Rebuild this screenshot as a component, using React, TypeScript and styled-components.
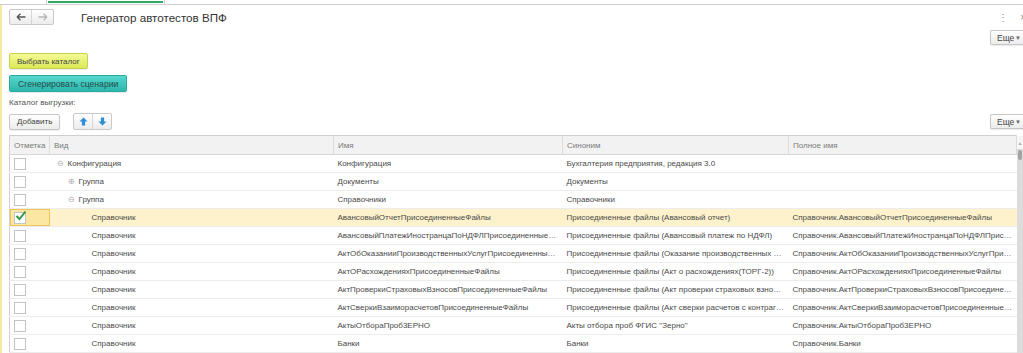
import styled, { createGlobalStyle } from 'styled-components';

const GlobalStyle = createGlobalStyle`
  html, body {
    margin: 0;
    padding: 0;
    background: #ffffff;
    font-family: 'Liberation Sans', Arial, sans-serif;
    color: #4a4a4a;
    overflow: hidden;
  }
`;

const Page = styled.div`
  width: 1023px;
  height: 353px;
  display: flex;
  flex-direction: column;
  overflow: hidden;
`;

const TabStrip = styled.div`
  height: 4px;
  flex-shrink: 0;
  border-bottom: 1px solid #cfcfcf;
  display: flex;
  padding-left: 46px;
`;

const Tab = styled.div`
  width: 117px;
  border-left: 1px solid #cfcfcf;
  border-right: 1px solid #cfcfcf;
  position: relative;
  &::after {
    content: '';
    position: absolute;
    left: 1px;
    right: 1px;
    top: 1px;
    height: 2px;
    background: #2faa62;
  }
`;

const Body = styled.div`
  flex: 1 0 auto;
  border-left: 2px solid #f4e7a1;
  padding: 4px 0 0 7px;
  display: flex;
  flex-direction: column;
  & > * {
    flex-shrink: 0;
  }
`;

const TitleBar = styled.div`
  display: flex;
  align-items: center;
  height: 16px;
`;

const NavGroup = styled.div`
  display: flex;
  height: 14px;
  border: 1px solid #c9c9c9;
  border-radius: 2px;
  background: linear-gradient(#ffffff, #ececec);
`;

const NavBtn = styled.div`
  width: 21px;
  display: flex;
  align-items: center;
  justify-content: center;
  & + & {
    border-left: 1px solid #d6d6d6;
  }
`;

const Title = styled.div`
  margin-left: 27px;
  font-size: 11.6px;
  color: #333;
  flex: 1;
`;

const WinControls = styled.div`
  display: flex;
  gap: 12px;
  color: #888;
  font-size: 10px;
  margin-right: -3px;
`;

const RightRow = styled.div`
  display: flex;
  justify-content: flex-end;
  margin-top: 5px;
  height: 17px;
`;

const Button = styled.div<{ $variant?: 'lime' | 'teal' }>`
  display: inline-flex;
  align-items: center;
  height: 14px;
  padding: 0 7px;
  font-size: 8px;
  border-radius: 2px;
  border: 1px solid
    ${(p) =>
      p.$variant === 'lime' ? '#c7d24e' : p.$variant === 'teal' ? '#2aa9a1' : '#c6c6c6'};
  background: ${(p) =>
    p.$variant === 'lime'
      ? 'linear-gradient(#f4fb96, #dbe957)'
      : p.$variant === 'teal'
      ? 'linear-gradient(#56d6cc, #2db6ad)'
      : 'linear-gradient(#ffffff, #ececec)'};
  color: ${(p) => (p.$variant === 'teal' ? '#1f4d4b' : '#444')};
  box-shadow: 0 1px 1px rgba(0, 0, 0, 0.08);
  white-space: nowrap;
`;

const TealButton = styled(Button)`
  height: 15px;
  font-size: 8.6px;
  padding: 0 8px;
`;

const MoreButton = styled(Button)`
  height: 15px;
  width: 33px;
  box-sizing: border-box;
  font-size: 8.5px;
  padding: 0 2px 0 6px;
  justify-content: space-between;
  border-right: none;
  border-radius: 2px 0 0 2px;
`;

const Caret = styled.span`
  font-size: 6px;
  line-height: 6px;
  color: #666;
`;

const ButtonRow = styled.div`
  display: flex;
  align-items: center;
  margin-top: 6px;
`;

const Label = styled.div`
  font-size: 8px;
  color: #555;
  margin-top: 3px;
  height: 14px;
  display: flex;
  align-items: center;
`;

const CommandBar = styled.div`
  display: flex;
  align-items: center;
  margin-top: 4px;
  height: 17px;
  gap: 13px;
`;

const ArrowGroup = styled.div`
  display: flex;
  height: 15px;
  border: 1px solid #c9c9c9;
  border-radius: 2px;
  background: linear-gradient(#ffffff, #ececec);
`;

const ArrowBtn = styled.div`
  width: 18px;
  display: flex;
  align-items: center;
  justify-content: center;
  & + & {
    border-left: 1px solid #d6d6d6;
  }
`;

const Spacer = styled.div`
  flex: 1;
`;

const TableWrap = styled.div`
  margin-top: 5px;
  display: flex;
`;

const Table = styled.table`
  width: 1007px;
  border-collapse: collapse;
  table-layout: fixed;
  font-size: 8px;
  border-top: 1px solid #cfcfcf;
  border-left: 1px solid #cfcfcf;
`;

const Th = styled.th`
  height: 18px;
  padding: 0 4px;
  text-align: left;
  font-weight: normal;
  color: #7a7a7a;
  background: #f2f2f2;
  border-right: 1px solid #dcdcdc;
  border-bottom: 1px solid #d6d6d6;
  white-space: nowrap;
  overflow: hidden;
`;

const Tr = styled.tr<{ $selected?: boolean }>`
  background: ${(p) => (p.$selected ? '#fdf2cb' : '#ffffff')};
`;

const Td = styled.td`
  height: 17px;
  padding: 0 4px;
  border-bottom: 1px solid #ececec;
  white-space: nowrap;
  overflow: hidden;
  text-overflow: ellipsis;
  color: #4a4a4a;
`;

const CheckCell = styled(Td)<{ $selected?: boolean }>`
  padding: 0 0 0 4px;
  ${(p) =>
    p.$selected
      ? 'background: #fbe7a2; box-shadow: inset 0 0 0 1px #efc55a;'
      : ''}
`;

const Box = styled.div`
  width: 10px;
  height: 10px;
  border: 1px solid #c4c4c4;
  background: #fff;
  position: relative;
`;

const Tree = styled.span<{ $indent: number }>`
  display: inline-flex;
  align-items: center;
  padding-left: ${(p) => p.$indent}px;
`;

const Toggle = styled.span`
  display: inline-flex;
  width: 11px;
  color: #a8a8a8;
  font-size: 8px;
`;

const Scrollbar = styled.div`
  width: 7px;
  background: #dcdcdc;
  margin-top: 1px;
`;

const ScrollArrow = styled.div`
  height: 13px;
  display: flex;
  justify-content: center;
  align-items: center;
  background: #f6f6f6;
  color: #b0b0b0;
  font-size: 5px;
`;

const Thumb = styled.div`
  height: 10px;
  margin: 1px 1px 0;
  border-radius: 2px;
  background: #a3a3a3;
`;

const ArrowIcon = ({ dir, color }: { dir: 'left' | 'right' | 'up' | 'down'; color: string }) => {
  if (dir === 'up' || dir === 'down') {
    const d =
      dir === 'up'
        ? 'M5 0.5 L9.5 5 L6.8 5 L6.8 9.5 L3.2 9.5 L3.2 5 L0.5 5 Z'
        : 'M5 9.5 L9.5 5 L6.8 5 L6.8 0.5 L3.2 0.5 L3.2 5 L0.5 5 Z';
    return (
      <svg width="9" height="9" viewBox="0 0 10 10">
        <path d={d} fill={color} />
      </svg>
    );
  }
  const d =
    dir === 'left'
      ? 'M1 5 L4.5 1.8 M1 5 L4.5 8.2 M1 5 L9.5 5'
      : 'M9 5 L5.5 1.8 M9 5 L5.5 8.2 M0.5 5 L9 5';
  return (
    <svg width="10" height="10" viewBox="0 0 10 10">
      <path d={d} stroke={color} strokeWidth="1.3" fill="none" />
    </svg>
  );
};

type Row = {
  level: number;
  toggle?: 'open' | 'closed';
  kind: string;
  name: string;
  synonym: string;
  full: string;
  checked?: boolean;
};

const rows: Row[] = [
  { level: 0, toggle: 'open', kind: 'Конфигурация', name: 'Конфигурация', synonym: 'Бухгалтерия предприятия, редакция 3.0', full: '' },
  { level: 1, toggle: 'closed', kind: 'Группа', name: 'Документы', synonym: 'Документы', full: '' },
  { level: 1, toggle: 'open', kind: 'Группа', name: 'Справочники', synonym: 'Справочники', full: '' },
  { level: 2, kind: 'Справочник', name: 'АвансовыйОтчетПрисоединенныеФайлы', synonym: 'Присоединенные файлы (Авансовый отчет)', full: 'Справочник.АвансовыйОтчетПрисоединенныеФайлы', checked: true },
  { level: 2, kind: 'Справочник', name: 'АвансовыйПлатежИностранцаПоНДФЛПрисоединенныеФайлы', synonym: 'Присоединенные файлы (Авансовый платеж по НДФЛ)', full: 'Справочник.АвансовыйПлатежИностранцаПоНДФЛПрисоединенныеФайлы' },
  { level: 2, kind: 'Справочник', name: 'АктОбОказанииПроизводственныхУслугПрисоединенныеФайлы', synonym: 'Присоединенные файлы (Оказание производственных услуг)', full: 'Справочник.АктОбОказанииПроизводственныхУслугПрисоединенныеФайлы' },
  { level: 2, kind: 'Справочник', name: 'АктОРасхожденияхПрисоединенныеФайлы', synonym: 'Присоединенные файлы (Акт о расхождениях(ТОРГ-2))', full: 'Справочник.АктОРасхожденияхПрисоединенныеФайлы' },
  { level: 2, kind: 'Справочник', name: 'АктПроверкиСтраховыхВзносовПрисоединенныеФайлы', synonym: 'Присоединенные файлы (Акт проверки страховых взносов)', full: 'Справочник.АктПроверкиСтраховыхВзносовПрисоединенныеФайлы' },
  { level: 2, kind: 'Справочник', name: 'АктСверкиВзаиморасчетовПрисоединенныеФайлы', synonym: 'Присоединенные файлы (Акт сверки расчетов с контрагентом)', full: 'Справочник.АктСверкиВзаиморасчетовПрисоединенныеФайлы' },
  { level: 2, kind: 'Справочник', name: 'АктыОтбораПроб3ЕРНО', synonym: 'Акты отбора проб ФГИС "Зерно"', full: 'Справочник.АктыОтбораПроб3ЕРНО' },
  { level: 2, kind: 'Справочник', name: 'Банки', synonym: 'Банки', full: 'Справочник.Банки' },
];

function App() {
  return (
    <>
      <GlobalStyle />
      <Page>
        <TabStrip>
          <Tab />
        </TabStrip>
        <Body>
          <TitleBar>
            <NavGroup>
              <NavBtn>
                <ArrowIcon dir="left" color="#555" />
              </NavBtn>
              <NavBtn>
                <ArrowIcon dir="right" color="#b8b8b8" />
              </NavBtn>
            </NavGroup>
            <Title>Генератор автотестов ВПФ</Title>
            <WinControls>
              <span>⋮</span>
              <span>×</span>
            </WinControls>
          </TitleBar>
          <RightRow>
            <MoreButton>
              Еще <Caret>▼</Caret>
            </MoreButton>
          </RightRow>
          <ButtonRow>
            <Button $variant="lime">Выбрать каталог</Button>
          </ButtonRow>
          <ButtonRow>
            <TealButton $variant="teal">Сгенерировать сценарии</TealButton>
          </ButtonRow>
          <Label>Каталог выгрузки:</Label>
          <CommandBar>
            <Button>Добавить</Button>
            <ArrowGroup>
              <ArrowBtn>
                <ArrowIcon dir="up" color="#2f8fd6" />
              </ArrowBtn>
              <ArrowBtn>
                <ArrowIcon dir="down" color="#2f8fd6" />
              </ArrowBtn>
            </ArrowGroup>
            <Spacer />
            <MoreButton>
              Еще <Caret>▼</Caret>
            </MoreButton>
          </CommandBar>
          <TableWrap>
            <Table>
              <colgroup>
                <col style={{ width: 40 }} />
                <col style={{ width: 284 }} />
                <col style={{ width: 229 }} />
                <col style={{ width: 226 }} />
                <col style={{ width: 228 }} />
              </colgroup>
              <thead>
                <tr>
                  <Th>Отметка</Th>
                  <Th>Вид</Th>
                  <Th>Имя</Th>
                  <Th>Синоним</Th>
                  <Th>Полное имя</Th>
                </tr>
              </thead>
              <tbody>
                {rows.map((r, i) => (
                  <Tr key={i} $selected={r.checked}>
                    <CheckCell $selected={r.checked}>
                      <Box>
                        {r.checked && (
                          <svg
                            width="12"
                            height="12"
                            viewBox="0 0 12 12"
                            style={{ position: 'absolute', left: 0, top: -3 }}
                          >
                            <path d="M1.5 6 L4.5 9 L10.5 1.5" stroke="#2e9a3e" strokeWidth="2" fill="none" />
                          </svg>
                        )}
                      </Box>
                    </CheckCell>
                    <Td>
                      <Tree $indent={r.toggle ? r.level * 11 + 3 : r.level * 11 + 16}>
                        {r.toggle && <Toggle>{r.toggle === 'open' ? '⊖' : '⊕'}</Toggle>}
                        {r.kind}
                      </Tree>
                    </Td>
                    <Td>{r.name}</Td>
                    <Td>{r.synonym}</Td>
                    <Td>{r.full}</Td>
                  </Tr>
                ))}
              </tbody>
            </Table>
            <Scrollbar>
              <ScrollArrow>▲</ScrollArrow>
              <Thumb />
            </Scrollbar>
          </TableWrap>
        </Body>
      </Page>
    </>
  );
}

export default App;
